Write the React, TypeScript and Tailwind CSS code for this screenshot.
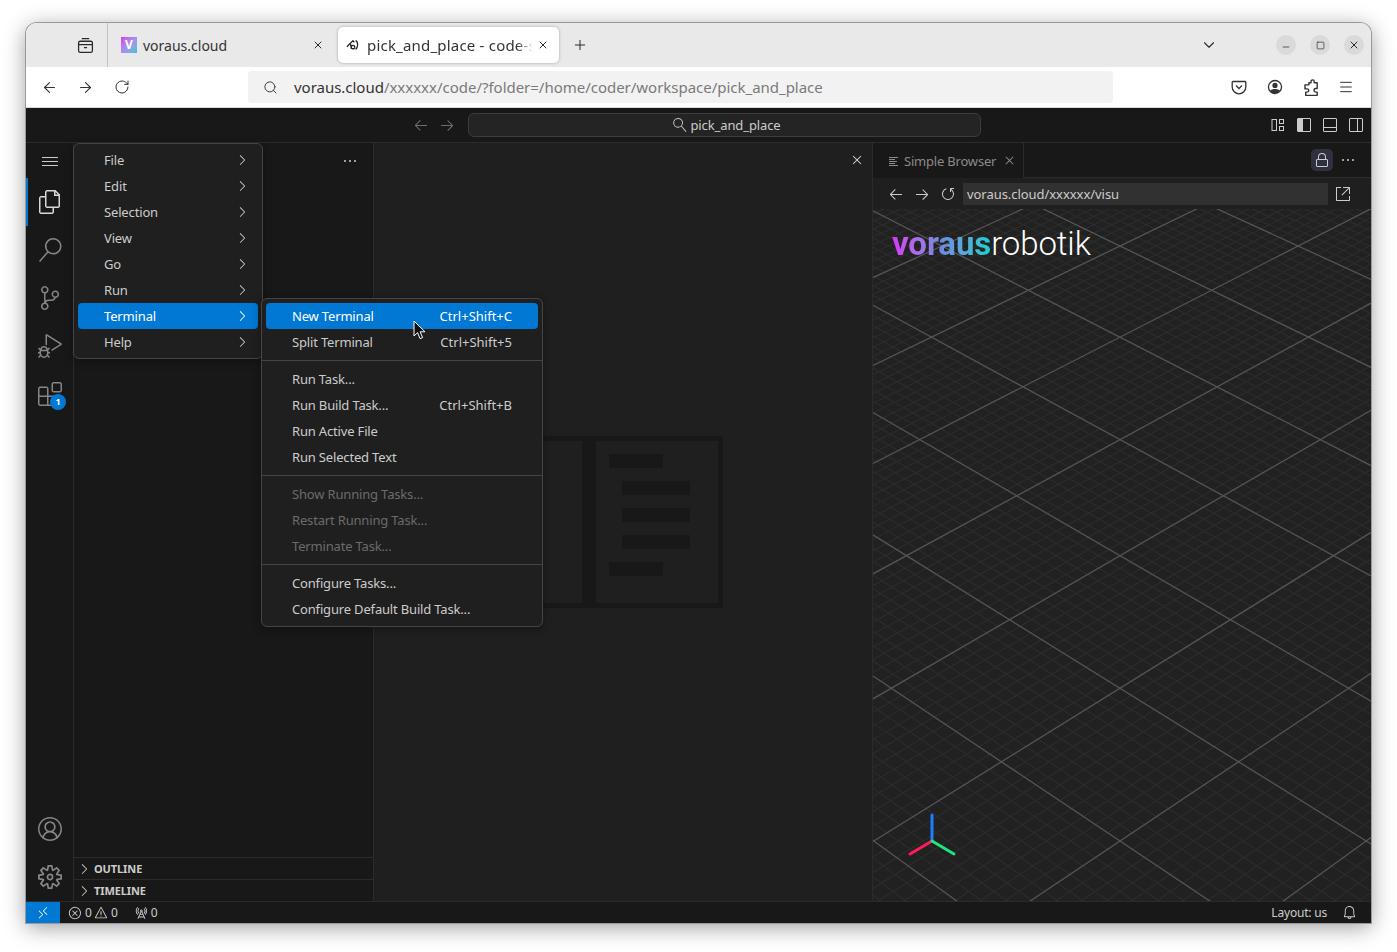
import { ArrowLeft, ArrowRight, ChevronDown, Menu, Minus, Plus, RotateCw, Search, Square, X } from "lucide-react";
import {
  VscAccount,
  VscArrowLeft,
  VscArrowRight,
  VscBell,
  VscChevronRight,
  VscClose,
  VscDebugAlt,
  VscEllipsis,
  VscError,
  VscExtensions,
  VscFiles,
  VscLayoutPanelOff,
  VscLayoutSidebarLeft,
  VscLayoutSidebarRightOff,
  VscLinkExternal,
  VscLock,
  VscMenu,
  VscRadioTower,
  VscRefresh,
  VscRemote,
  VscSearch,
  VscSettingsGear,
  VscSourceControl,
  VscWarning,
} from "react-icons/vsc";

const mainMenu = ["File", "Edit", "Selection", "View", "Go", "Run", "Terminal", "Help"];

const terminalMenu = [
  [
    { label: "New Terminal", keys: "Ctrl+Shift+C", active: true },
    { label: "Split Terminal", keys: "Ctrl+Shift+5" },
  ],
  [
    { label: "Run Task..." },
    { label: "Run Build Task...", keys: "Ctrl+Shift+B" },
    { label: "Run Active File" },
    { label: "Run Selected Text" },
  ],
  [
    { label: "Show Running Tasks...", disabled: true },
    { label: "Restart Running Task...", disabled: true },
    { label: "Terminate Task...", disabled: true },
  ],
  [{ label: "Configure Tasks..." }, { label: "Configure Default Build Task..." }],
];

// perspective floor of the 3d view, values measured from the picture
const horizonY = -1311;
const centerX = 1120;
const vanishDx = 3221;
const floorY = (t: number) => horizonY + 1 / (0.00046468 + 0.000017758 * t);

function gridLines() {
  const lines = [];
  for (let n = -60; n <= 90; n++) {
    const y = floorY(n / 5);
    const slope = (y - horizonY) / vanishDx;
    const major = n % 10 === 0;
    for (const dir of [-1, 1]) {
      lines.push(
        <line
          key={`${n}:${dir}`}
          x1={873}
          y1={y + dir * slope * (873 - centerX)}
          x2={1371}
          y2={y + dir * slope * (1371 - centerX)}
          stroke={major ? "#555555" : "#2c2c2c"}
          strokeWidth={major ? 1.3 : 1.2}
        />
      );
    }
  }
  // majors on top of the fine lines
  return lines.sort((a, b) => (a.props.strokeWidth as number) - (b.props.strokeWidth as number));
}

function ActivityItem({ children, active }: { children: React.ReactNode; active?: boolean }) {
  return (
    <div className={`relative flex h-12 w-full items-center justify-center ${active ? "border-l-2 border-[#0078d4] pr-[2px] text-[#d7d7d7]" : "text-[#868686]"}`}>
      {children}
    </div>
  );
}

function MainMenu() {
  return (
    <div className="absolute left-[47px] top-[120px] z-20 w-[190px] rounded-[6px] border border-[#454545] bg-[#1f1f1f] px-[4px] py-[3px] shadow-[0_2px_8px_rgba(0,0,0,0.36)]">
      {mainMenu.map((item) => (
        <div
          key={item}
          className={`flex h-[26px] items-center justify-between rounded-[4px] pl-[26px] pr-[8px] text-[13px] ${item === "Terminal" ? "bg-[#0078d4] text-white" : "text-[#cccccc]"}`}
        >
          <span className="pt-[2px] tracking-[-0.15px]">{item}</span>
          <VscChevronRight size={16} />
        </div>
      ))}
    </div>
  );
}

function TerminalMenu() {
  return (
    <div className="absolute left-[235px] top-[275px] z-30 w-[282px] rounded-[6px] border border-[#454545] bg-[#1f1f1f] py-[4px] shadow-[0_2px_8px_rgba(0,0,0,0.36)]">
      {terminalMenu.map((group, i) => (
        <div key={i}>
          {i > 0 && <div className="my-[5px] h-px bg-[#454545]" />}
          {group.map((item) => (
            <div
              key={item.label}
              className={`mx-[4px] flex h-[26px] items-center justify-between rounded-[4px] pl-[26px] pr-[26px] pt-[2px] text-[13px] ${item.active ? "bg-[#0078d4] text-white" : item.disabled ? "text-[#6b6b6b]" : "text-[#cccccc]"}`}
            >
              <span className="tracking-[-0.17px]">{item.label}</span>
              {item.keys && <span>{item.keys}</span>}
            </div>
          ))}
        </div>
      ))}
    </div>
  );
}

function BrowserChrome() {
  return (
    <>
      <div className="flex h-[44px] items-center bg-[#e9e9e9] text-[#2b2b2b]">
        <div className="flex h-full w-[82px] items-center justify-end border-r border-[#c4c4c4] pr-[13px]">
          <svg viewBox="0 0 16 16" className="h-[17px] w-[17px]" fill="none" stroke="currentColor" strokeWidth="1.2">
            <path d="M4.5 1.5h7" />
            <rect x="1.5" y="4" width="13" height="10.5" rx="1.6" />
            <path d="M1.5 7.2h13M6.5 10h3" />
          </svg>
        </div>
        <div className="flex h-[36px] w-[230px] items-center pl-[13px] pr-[14px]">
          <div className="mr-[6px] flex h-[16px] w-[16px] items-center justify-center bg-gradient-to-br from-[#d633f5] to-[#00c8d8] text-[12px] font-bold leading-none text-white">
            V
          </div>
          <span className="flex-1 text-[14px] text-[#333333]">voraus.cloud</span>
          <X size={12} strokeWidth={2} />
        </div>
        <div className="flex h-[36px] w-[221px] items-center rounded-[5px] bg-white pl-[8px] pr-[10px] text-[15px] shadow-[0_0_3px_rgba(0,0,0,0.3)]">
          <svg viewBox="0 0 16 16" className="mr-[7px] h-[14px] w-[14px] shrink-0 text-[#222222]" fill="none" stroke="currentColor" strokeWidth="1.4">
            <path d="M1 10 5 6l3-3 1.5 2M5 6l1 6 4 0M11 3c3 1 3 8 0 10M8 8.5a2 2 0 1 0 .1 0" />
          </svg>
          <span className="flex-1 overflow-hidden whitespace-nowrap tracking-[0.2px] text-[#333333] [mask-image:linear-gradient(to_left,transparent,black_16px)]">
            pick_and_place - code-server
          </span>
          <X size={12} strokeWidth={2} className="ml-[4px] shrink-0" />
        </div>
        <Plus size={16} strokeWidth={1.5} className="ml-[13px]" />
        <ChevronDown size={18} strokeWidth={1.5} className="ml-[612px]" />
        <div className="ml-[58px] flex gap-[14px]">
          <div className="flex h-[20px] w-[20px] items-center justify-center rounded-full bg-[#dadada]">
            <Minus size={10} strokeWidth={1.8} className="mt-[4px]" />
          </div>
          <div className="flex h-[20px] w-[20px] items-center justify-center rounded-full bg-[#dadada]">
            <Square size={9} strokeWidth={1.8} />
          </div>
          <div className="flex h-[20px] w-[20px] items-center justify-center rounded-full bg-[#dadada]">
            <X size={12} strokeWidth={2} />
          </div>
        </div>
      </div>
      <div className="flex h-[40px] items-center bg-white text-[#333333]">
        <ArrowLeft size={17} strokeWidth={1.5} className="ml-[15px]" />
        <ArrowRight size={17} strokeWidth={1.5} className="ml-[19px]" />
        <RotateCw size={16} strokeWidth={1.5} className="ml-[20px]" />
        <div className="ml-[118px] flex h-[32px] w-[865px] items-center rounded-[4px] bg-[#f2f2f2] pl-[15px] text-[15px]">
          <Search size={15} strokeWidth={1.5} />
          <span className="ml-[16px] whitespace-nowrap tracking-[-0.02px] text-[#333333]">
            voraus.cloud<span className="text-[#7a7a7a]">/xxxxxx/code/?folder=/home/coder/workspace/pick_and_place</span>
          </span>
        </div>
        <svg viewBox="0 0 16 16" className="ml-[118px] h-[16px] w-[16px]" fill="none" stroke="currentColor" strokeWidth="1.3">
          <path d="M2 2.5h12a.8.8 0 0 1 .8.8V8a6.8 6.8 0 0 1-13.6 0V3.3a.8.8 0 0 1 .8-.8Z" />
          <path d="m5 6.5 3 3 3-3" />
        </svg>
        <svg viewBox="0 0 16 16" className="ml-[20px] h-[16px] w-[16px]" fill="currentColor">
          <path d="M8 .8a7.2 7.2 0 1 0 0 14.4A7.2 7.2 0 0 0 8 .8Zm0 1.4a5.8 5.8 0 0 1 4.7 9.2c-1-1-2.9-1.5-4.7-1.5s-3.7.5-4.7 1.5A5.8 5.8 0 0 1 8 2.2Z" />
          <circle cx="8" cy="6.4" r="2.6" />
        </svg>
        <svg viewBox="0 0 16 16" className="ml-[19px] h-[17px] w-[17px]" fill="none" stroke="currentColor" strokeWidth="1.3" strokeLinejoin="round">
          <path d="M6.5 3.5h2V2.3a1.5 1.5 0 0 1 3 0v1.2h2.8V9H13a1.700 1.700 0 0 0 0 3.4h1.3v3H3.5v-3.1h1.3a1.500 1.500 0 0 0 0-3H2.800V5.500h3.700Z" />
        </svg>
        <Menu size={16} strokeWidth={1.5} className="ml-[19px]" />
      </div>
      <div className="h-px bg-[#d8d8d8]" />
    </>
  );
}

function Watermark() {
  return (
    <svg viewBox="0 0 200 172" className="h-[172px] w-[200px]">
      <rect x="2.5" y="2.5" width="195" height="167" fill="none" stroke="#181818" strokeWidth="5" />
      <rect x="59" y="2" width="14" height="168" fill="#181818" />
      <g fill="#181818">
        <rect x="86" y="18" width="54" height="14" />
        <rect x="99" y="45" width="68" height="14" />
        <rect x="99" y="72" width="68" height="14" />
        <rect x="99" y="99" width="68" height="14" />
        <rect x="86" y="126" width="54" height="14" />
      </g>
    </svg>
  );
}

function SimpleBrowser() {
  return (
    <div className="flex w-[499px] flex-col border-l border-[#2b2b2b] bg-[#1f1f1f]">
      <div className="flex h-[35px] items-stretch border-b border-[#2b2b2b] bg-[#181818]">
        <div className="-mb-px flex w-[151px] items-center border-r border-[#2b2b2b] bg-[#181818] pl-[16px] text-[13px] text-[#8a8a8a]">
          <svg viewBox="0 0 9 10" className="h-[10px] w-[9px]" stroke="currentColor" strokeWidth="1">
            <path d="M0 1.5h9M0 3.5h6M0 5.5h8M0 7.5h6M0 9.5h9" />
          </svg>
          <span className="ml-[6px] pt-[2px] tracking-[-0.2px]">Simple Browser</span>
          <VscClose size={15} className="ml-[6px]" />
        </div>
        <div className="flex flex-1 items-center justify-end pr-[15px] text-[#cccccc]">
          <div className="flex h-[22px] w-[22px] items-center justify-center rounded-[5px] bg-[#2f3140]">
            <VscLock size={16} />
          </div>
          <VscEllipsis size={16} className="ml-[7px]" />
        </div>
      </div>
      <div className="flex h-[31px] items-center text-[#cccccc]">
        <VscArrowLeft size={16} className="ml-[15px]" />
        <VscArrowRight size={16} className="ml-[10px]" />
        <VscRefresh size={16} className="ml-[10px] -scale-x-100" />
        <div className="ml-[7px] flex h-[22px] w-[365px] items-center bg-[#313131] pl-[4px] pt-[2px] text-[13px] tracking-[-0.05px]">voraus.cloud/xxxxxx/visu</div>
        <VscLinkExternal size={16} className="ml-[7px]" />
      </div>
      <div className="relative flex-1 overflow-hidden bg-[#212121]">
        <svg viewBox="873 209 498 692" className="absolute inset-0 h-full w-full">
          {gridLines()}
          <g strokeWidth="3" strokeLinecap="round">
            <line x1="932" y1="841" x2="932" y2="815" stroke="#1a7fff" />
            <line x1="932" y1="841" x2="910" y2="854" stroke="#ff1a5c" />
            <line x1="932" y1="841" x2="954" y2="854" stroke="#1ae87a" />
          </g>
        </svg>
        <div className="absolute left-[19px] top-[15px] whitespace-nowrap font-['Roboto',sans-serif] text-[33px] leading-[40px] tracking-[-0.1px] text-white">
          <span className="bg-gradient-to-r from-[#d633f5] via-[#6a8ce0] to-[#00d0d0] bg-clip-text font-bold text-transparent">voraus</span>
          <span className="font-light">robotik</span>
        </div>
      </div>
    </div>
  );
}

export default function App() {
  return (
    <div className="h-[952px] w-[1397px] overflow-hidden bg-white pl-[26px] pt-[23px] font-['Noto_Sans',sans-serif]">
      <div className="relative flex h-[900px] w-[1345px] flex-col overflow-hidden rounded-t-[11px] shadow-[0_0_0_1px_#9a9a9a,0_4px_22px_rgba(0,0,0,0.4)]">
        <BrowserChrome />

        {/* title bar */}
        <div className="flex h-[35px] items-center border-b border-[#2b2b2b] bg-[#181818] text-[#cccccc]">
          <VscArrowLeft size={16} className="ml-[387px] text-[#6e6e6e]" />
          <VscArrowRight size={16} className="ml-[10px] text-[#6e6e6e]" />
          <div className="ml-[13px] flex h-[24px] w-[513px] items-center justify-center rounded-[6px] border border-[#3c3c3c] bg-[#242424] pl-[5px] text-[13px] tracking-[-0.1px]">
            <VscSearch size={14} className="mr-[3px] -scale-x-100" />
            <span className="pt-[2px]">pick_and_place</span>
          </div>
          <div className="ml-auto flex gap-[10px] pr-[7px]">
            <svg viewBox="0 0 16 16" className="h-[16px] w-[16px]" fill="none" stroke="currentColor">
              <rect x="2" y="2.5" width="4.5" height="11" />
              <rect x="9.5" y="2.5" width="4" height="4" />
              <rect x="9.5" y="9.5" width="4" height="4" />
            </svg>
            <VscLayoutSidebarLeft size={16} />
            <VscLayoutPanelOff size={16} />
            <VscLayoutSidebarRightOff size={16} />
          </div>
        </div>

        <div className="flex h-[758px]">
          {/* activity bar */}
          <div className="flex w-[48px] flex-col items-center border-r border-[#2b2b2b] bg-[#181818]">
            <div className="flex h-[35px] items-center text-[#cccccc]">
              <VscMenu size={16} />
            </div>
            <ActivityItem active>
              <VscFiles size={24} />
            </ActivityItem>
            <ActivityItem>
              <VscSearch size={24} />
            </ActivityItem>
            <ActivityItem>
              <VscSourceControl size={24} />
            </ActivityItem>
            <ActivityItem>
              <VscDebugAlt size={24} />
            </ActivityItem>
            <ActivityItem>
              <VscExtensions size={24} />
              <div className="absolute left-[24px] top-[24px] flex h-[16px] w-[16px] items-center justify-center rounded-full bg-[#0078d4] text-[9px] font-bold text-white">
                1
              </div>
            </ActivityItem>
            <div className="mt-auto w-full">
              <ActivityItem>
                <VscAccount size={24} />
              </ActivityItem>
              <ActivityItem>
                <VscSettingsGear size={24} />
              </ActivityItem>
            </div>
          </div>

          {/* sidebar */}
          <div className="flex w-[300px] flex-col border-r border-[#2b2b2b] bg-[#181818] text-[#cccccc]">
            <div className="flex h-[35px] items-center justify-end pr-[15px]">
              <VscEllipsis size={16} />
            </div>
            <div className="flex-1" />
            {["OUTLINE", "TIMELINE"].map((name) => (
              <div key={name} className="flex h-[22px] items-center border-t border-[#2b2b2b] pl-[2px] text-[11px] font-bold">
                <VscChevronRight size={16} />
                <span className="ml-[2px] pt-[2px] tracking-[-0.1px]">{name}</span>
              </div>
            ))}
          </div>

          {/* editor */}
          <div className="relative flex w-[498px] items-center justify-center bg-[#1f1f1f]">
            <Watermark />
            <VscClose size={16} className="absolute right-[7px] top-[9px] text-[#cccccc]" />
          </div>

          <SimpleBrowser />
        </div>

        {/* status bar */}
        <div className="flex h-[22px] items-center border-t border-[#2b2b2b] bg-[#181818] text-[12px] text-[#cccccc]">
          <div className="flex h-full w-[34px] items-center justify-center bg-[#0078d4] text-white">
            <VscRemote size={14} />
          </div>
          <VscError size={14} className="ml-[8px]" />
          <span className="ml-[3px]">0</span>
          <VscWarning size={14} className="ml-[2px]" />
          <span className="ml-[3px]">0</span>
          <VscRadioTower size={14} className="ml-[16px]" />
          <span className="ml-[3px]">0</span>
          <span className="ml-auto tracking-[-0.2px]">Layout: us</span>
          <VscBell size={15} className="ml-[15px] mr-[14px]" />
        </div>

        <MainMenu />
        <TerminalMenu />

        {/* mouse pointer */}
        <svg viewBox="0 0 14 20" className="absolute left-[387px] top-[297px] z-40 h-[20px] w-[14px]">
          <path d="M1 1v15l3.6-3.4 2.4 6 2.6-1-2.5-5.8H12Z" fill="#111111" stroke="#ffffff" strokeWidth="1" />
        </svg>
      </div>
    </div>
  );
}
